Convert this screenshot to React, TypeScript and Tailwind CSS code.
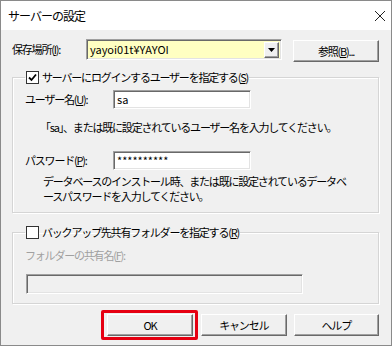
import React from "react";

const font = { fontFamily: '"Meiryo UI", "Noto Sans CJK JP", sans-serif' };

const raised =
  "border border-t-white border-l-white border-r-[#696969] border-b-[#696969] shadow-[inset_-1px_-1px_0_#a0a0a0] bg-[#f0f0f0]";
const sunken =
  "border border-t-[#a0a0a0] border-l-[#a0a0a0] border-r-white border-b-white shadow-[inset_1px_1px_0_#696969,inset_-1px_-1px_0_#e3e3e3]";
const etched =
  "border border-[#d5d5d5] shadow-[inset_1px_1px_0_#fff,1px_1px_0_#fff]";

const Button = ({ children, className = "" }: { children: React.ReactNode; className?: string }) => (
  <div className={`w-[86px] h-[22px] flex items-center justify-center text-black ${raised} ${className}`}>
    {children}
  </div>
);

const Check = ({ checked }: { checked: boolean }) => (
  <span className="w-[13px] h-[13px] border border-[#333] bg-white flex items-center justify-center">
    {checked && (
      <svg width="9" height="9" viewBox="0 0 9 9">
        <path d="M1 4.5 L3.5 7 L8 1.5" stroke="#000" strokeWidth="1.8" fill="none" />
      </svg>
    )}
  </span>
);

export default function App() {
  return (
    <div
      className="w-[392px] h-[346px] border border-[#8a8a8a] flex flex-col text-[11px] tracking-[-1.2px] text-black"
      style={font}
    >
      {/* title bar */}
      <div className="h-[29px] bg-white flex items-center justify-between pl-[7px] pr-[5px]">
        <span className="text-[12px] tracking-[-1px]">サーバーの設定</span>
        <svg width="12" height="12" viewBox="0 0 12 12">
          <path d="M1 1 L11 11 M11 1 L1 11" stroke="#222" strokeWidth="1" />
        </svg>
      </div>

      <div className="flex-1 bg-[#f0f0f0] pl-[11px] pr-[12px] pt-[9px]">
        {/* location row */}
        <div className="flex items-start h-[22px]">
          <span className="w-[74px] h-[20px] flex items-center">
            保存場所(<u>I</u>):
          </span>
          <div className={`w-[196px] h-[21px] bg-[#ffffc2] flex items-center pl-[3px] pr-[2px] ${sunken}`}>
            <span className="flex-1 tracking-normal">yayoi01t¥YAYOI</span>
            <span className={`w-[15px] h-[16px] flex items-center justify-center ${raised}`}>
              <svg width="7" height="4" viewBox="0 0 7 4">
                <path d="M0 0 H7 L3.5 4 Z" fill="#000" />
              </svg>
            </span>
          </div>
          <Button className="ml-[11px] mt-[1px]">
            参照(<u>B</u>)...
          </Button>
        </div>

        {/* group 1 */}
        <fieldset className={`mt-[9px] w-[367px] pl-[12px] pb-[8px] ${etched}`}>
          <legend className="px-[1px] flex items-center gap-[3px] h-[14px]">
            <Check checked />
            <span>
              サーバーにログインするユーザーを指定する(<u>S</u>)
            </span>
          </legend>
          <div className="flex items-center mt-[6px]">
            <span className="w-[88px]">
              ユーザー名(<u>U</u>):
            </span>
            <div className={`w-[138px] h-[19px] bg-white flex items-center pl-[3px] tracking-normal ${sunken}`}>
              sa
            </div>
          </div>
          <p className="ml-[15px] mt-[11px] leading-[14px]">
            「sa」、または既に設定されているユーザー名を入力してください。
          </p>
          <div className="flex items-center mt-[17px]">
            <span className="w-[88px]">
              パスワード(<u>P</u>):
            </span>
            <div className={`w-[138px] h-[19px] bg-white flex items-center pl-[3px] tracking-normal ${sunken}`}>
              **********
            </div>
          </div>
          <p className="ml-[18px] mt-[4px] leading-[15px] whitespace-nowrap">
            データベースのインストール時、または既に設定されているデータベ
            <br />
            ースパスワードを入力してください。
          </p>
        </fieldset>

        {/* group 2 */}
        <fieldset className={`mt-[12px] w-[367px] pl-[12px] pb-[9px] ${etched}`}>
          <legend className="px-[1px] flex items-center gap-[3px] h-[14px]">
            <Check checked={false} />
            <span>
              バックアップ先共有フォルダーを指定する(<u>R</u>)
            </span>
          </legend>
          <p className="mt-[9px] text-[#a0a0a0] leading-[14px]">
            フォルダーの共有名(<u>F</u>):
          </p>
          <div className={`mt-[12px] ml-[1px] w-[277px] h-[20px] bg-[#f0f0f0] ${sunken}`} />
        </fieldset>

        {/* buttons */}
        <div className="flex mt-[10px] pl-[95px] gap-[7px]">
          <div className="relative">
            <Button>OK</Button>
            <span className="absolute -left-[6px] -top-[4px] -right-[5px] -bottom-[4px] border-[3px] border-[#e60012] rounded-[2px]" />
          </div>
          <Button className="ml-[1px]">キャンセル</Button>
          <Button>ヘルプ</Button>
        </div>
      </div>
    </div>
  );
}
